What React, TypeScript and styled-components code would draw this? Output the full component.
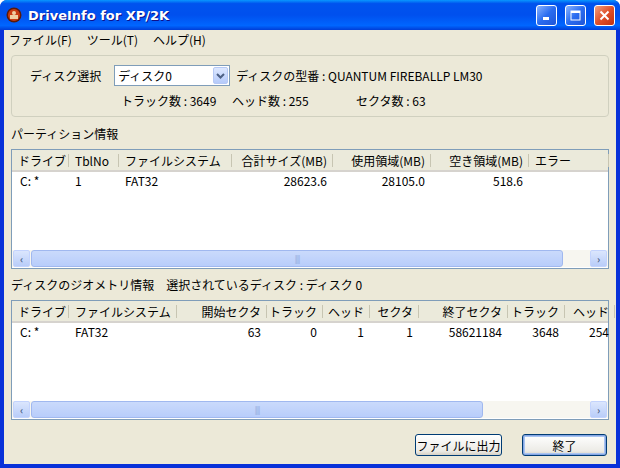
import React from "react";
import styled, { createGlobalStyle } from "styled-components";

const G = createGlobalStyle`
  html,body{margin:0;padding:0;background:#fff;}
  body{font-family:"Noto Sans CJK JP","Liberation Sans",sans-serif;font-size:12px;}
  *{box-sizing:border-box;}
`;
const Win = styled.div`
  width:620px;height:468px;display:flex;flex-direction:column;
  background:#0831d9;border-radius:7px 7px 0 0;overflow:hidden;
`;
const Title = styled.div`
  height:30px;display:flex;align-items:center;padding:0 5px 0 6px;gap:6px;
  background:linear-gradient(#0997ff 0%,#0053ee 12%,#0050ee 50%,#0066ff 85%,#003dd7 100%);
  color:#fff;font-family:"DejaVu Sans",sans-serif;font-weight:bold;font-size:13px;
  text-shadow:1px 1px #0f1089;
`;
const TitleText = styled.div`flex:1;`;
const TBtn = styled.div<{ close?: boolean }>`
  width:21px;height:21px;border:1px solid #fff;border-radius:3px;margin-left:2px;
  background:${p => p.close ? "linear-gradient(135deg,#f0a080,#e0502a 50%,#c03010)" : "linear-gradient(135deg,#8ab4ff,#2a6cf0 50%,#1f55d8)"};
  display:flex;align-items:center;justify-content:center;
`;
const Body = styled.div`
  flex:1;margin:0 4px 4px;background:#ece9d8;display:flex;flex-direction:column;
`;
const Menu = styled.div`
  height:19px;display:flex;gap:15px;padding:0 5px;align-items:center;font-size:12px;color:#000;
`;
const Content = styled.div`padding:6px 7px 0;display:flex;flex-direction:column;`;
const Group = styled.div`
  height:62px;border:1px solid #d0d0bf;border-radius:4px;padding:9px 0 0 18px;
  display:flex;flex-direction:column;gap:6px;
`;
const Row = styled.div`display:flex;align-items:center;`;
const Combo = styled.div`
  width:116px;height:21px;border:1px solid #7f9db9;background:#fff;margin:0 6px 0 13px;
  display:flex;align-items:center;justify-content:space-between;padding:0 1px 0 3px;
`;
const ComboBtn = styled.div`
  width:15px;height:17px;background:linear-gradient(#dde8ff,#b5cafa);border:1px solid #b6c9f5;border-radius:2px;
  display:flex;align-items:center;justify-content:center;
`;
const Stat = styled.span<{ w: number }>`display:inline-block;width:${p => p.w}px;`;
const Label = styled.div<{ t: number }>`margin-top:${p => p.t}px;height:14px;line-height:14px;`;
const List = styled.div`
  margin-top:${8}px;width:598px;height:120px;border:1px solid #7f9db9;background:#fff;
  display:flex;flex-direction:column;
`;
const Head = styled.div`
  height:22px;display:flex;background:#ebeadb;border-bottom:2px solid #d6d3ce;
`;
const HCell = styled.div<{ w: number; r?: boolean }>`
  width:${p => p.w}px;flex:none;padding:0 6px;display:flex;align-items:center;
  justify-content:${p => p.r ? "flex-end" : "flex-start"};position:relative;white-space:nowrap;
  &:after{content:"";position:absolute;right:0;top:4px;bottom:3px;width:1px;background:#c7c5b2;}
`;
const DRow = styled.div`height:17px;display:flex;`;
const DCell = styled.div<{ w: number; r?: boolean }>`
  width:${p => p.w}px;flex:none;padding:0 6px;display:flex;align-items:center;white-space:nowrap;
  justify-content:${p => p.r ? "flex-end" : "flex-start"};
`;
const Fill = styled.div`flex:1;`;
const HScroll = styled.div`
  height:17px;display:flex;background:#f7f6f0;padding:0 1px;margin-bottom:1px;align-items:stretch;
`;
const SBtn = styled.div`
  width:17px;background:linear-gradient(#dbe6fd,#b9cdf9);border:1px solid #c3d3fd;border-radius:2px;
  display:flex;align-items:center;justify-content:center;color:#4d6185;font-size:10px;font-weight:bold;
`;
const Thumb = styled.div<{ w: number }>`
  width:${p => p.w}px;margin:0 1px;background:linear-gradient(#cadafb,#b8cdfb);border:1px solid #a0b8ef;border-radius:3px;
  display:flex;align-items:center;justify-content:center;color:#8fa7e0;font-size:8px;letter-spacing:-1px;
`;
const Btns = styled.div`display:flex;justify-content:flex-end;gap:20px;margin-top:14px;padding-right:2px;`;
const Btn = styled.div<{ w: number; def?: boolean }>`
  width:${p => p.w}px;height:22px;border:1px solid #003c74;border-radius:3px;
  background:linear-gradient(#fff,#ecebe6 80%,#d6d0c5);display:flex;align-items:center;justify-content:center;
  box-shadow:${p => p.def ? "inset 0 0 0 1px #86a6e4, inset 0 0 0 2px #a8c4f0" : "none"};
`;

type C = [string, number, boolean?];
const c1: C[] = [["ドライブ",57],["TblNo",50],["ファイルシステム",113],["合計サイズ(MB)",101,true],["使用領域(MB)",98,true],["空き領域(MB)",98,true],["エラー",80]];
const d1 = ["C: *","1","FAT32","28623.6","28105.0","518.6",""];
const c2: C[] = [["ドライブ",57],["ファイルシステム",108],["開始セクタ",90,true],["トラック",56,true],["ヘッド",47,true],["セクタ",49,true],["終了セクタ",89,true],["トラック",57,true],["ヘッド",50,true]];
const d2 = ["C: *","FAT32","63","0","1","1","58621184","3648","254"];

const Table = ({ cols, data, thumb }: { cols: C[]; data: string[]; thumb: number }) => (
  <List>
    <Head>{cols.map((c, i) => <HCell key={i} w={c[1]} r={c[2]}>{c[0]}</HCell>)}</Head>
    <DRow>{cols.map((c, i) => <DCell key={i} w={c[1]} r={c[2]}>{i === 0 ? <span style={{ paddingLeft: 2 }}>{data[i]}</span> : data[i]}</DCell>)}</DRow>
    <Fill />
    <HScroll>
      <SBtn>‹</SBtn><Thumb w={thumb}>||||</Thumb><Fill /><SBtn>›</SBtn>
    </HScroll>
  </List>
);

export default function App() {
  return (
    <Win>
      <G />
      <Title>
        <svg width="16" height="16" viewBox="0 0 16 16"><circle cx="8" cy="8" r="7.5" fill="#5a1a08"/><circle cx="8" cy="8" r="6" fill="#c83c10"/><rect x="4" y="8" width="8" height="4" fill="#f0d0a0"/><circle cx="8" cy="6" r="2" fill="#f0d0a0"/></svg>
        <TitleText>DriveInfo for XP/2K</TitleText>
        <TBtn><svg width="9" height="9"><rect x="1" y="6" width="6" height="3" fill="#fff"/></svg></TBtn>
        <TBtn><svg width="11" height="11"><rect x="1" y="1" width="9" height="9" fill="none" stroke="#fff" strokeWidth="1"/><rect x="1" y="1" width="9" height="2" fill="#fff"/></svg></TBtn>
        <TBtn close><svg width="11" height="11"><path d="M1.5 1.5L9.5 9.5M9.5 1.5L1.5 9.5" stroke="#fff" strokeWidth="2"/></svg></TBtn>
      </Title>
      <Body>
        <Menu><span>ファイル(F)</span><span>ツール(T)</span><span>ヘルプ(H)</span></Menu>
        <Content>
          <Group>
            <Row>
              ディスク選択
              <Combo>ディスク0<ComboBtn><svg width="9" height="6"><path d="M1 1L4.5 4.5L8 1" stroke="#4d6185" strokeWidth="2" fill="none"/></svg></ComboBtn></Combo>
              ディスクの型番 : QUANTUM FIREBALLP LM30
            </Row>
            <Row style={{ paddingLeft: 91 }}>
              <Stat w={111}>トラック数 : 3649</Stat><Stat w={124}>ヘッド数 : 255</Stat><Stat w={100}>セクタ数 : 63</Stat>
            </Row>
          </Group>
          <Label t={10}>パーティション情報</Label>
          <Table cols={c1} data={d1} thumb={532} />
          <Label t={9}>ディスクのジオメトリ情報　選択されているディスク : ディスク 0</Label>
          <Table cols={c2} data={d2} thumb={452} />
          <Btns>
            <Btn w={87}>ファイルに出力</Btn>
            <Btn w={85} def>終了</Btn>
          </Btns>
        </Content>
      </Body>
    </Win>
  );
}
